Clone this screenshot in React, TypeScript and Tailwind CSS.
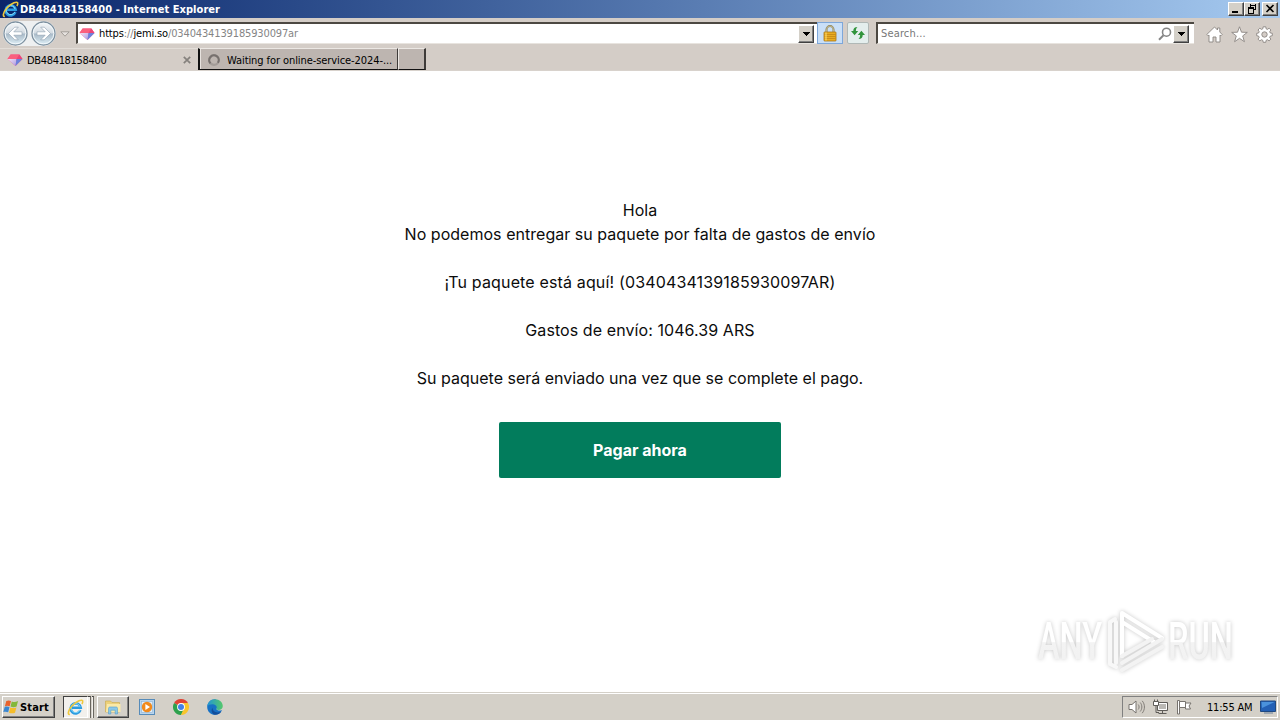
import type { ReactNode } from 'react';

const messageLines = [
  { text: 'Hola', tracking: '' },
  { text: 'No podemos entregar su paquete por falta de gastos de envío', tracking: 'tracking-[0.03px]' },
  { text: '', tracking: '' },
  { text: '¡Tu paquete está aquí! (0340434139185930097AR)', tracking: 'tracking-[0.15px]' },
  { text: '', tracking: '' },
  { text: 'Gastos de envío: 1046.39 ARS', tracking: 'tracking-[0.08px]' },
  { text: '', tracking: '' },
  { text: 'Su paquete será enviado una vez que se complete el pago.', tracking: '' },
];

const raised =
  'border border-t-white border-l-white border-r-[#404040] border-b-[#404040] shadow-[inset_-1px_-1px_0_#808080]';

const IeIcon = ({ className }: { className: string }) => (
  <svg viewBox="0 0 18 18" className={className} fill="none">
    <path d="M14.2 11.8A5.3 5.3 0 1 1 14.5 9.3H5" stroke="#2b9be0" strokeWidth="2.8" />
    <path d="M13.7 11.4A4.8 4.8 0 1 1 13.9 8.6" stroke="#8adcfa" strokeWidth="1" />
    <path d="M3 16.2C.5 17 .8 12.5 5.2 7.4 10 2 16.5-.2 16.7 2.3c.1.9-.2 1.9-.9 3" stroke="#efc83c" strokeWidth="1.7" />
  </svg>
);

const GemIcon = () => (
  <svg viewBox="0 0 16 14" className="h-[14px] w-4 shrink-0">
    <defs>
      <linearGradient id="gem" x1="0" y1="0" x2="1" y2="1">
        <stop offset="0" stopColor="#f4e3f2" />
        <stop offset="1" stopColor="#a99ae4" />
      </linearGradient>
    </defs>
    <path d="M3.6 1.5h8.8L15.5 6l-7 7L.5 6z" fill="#f4558c" />
    <path d="M.5 6 3.6 1.5h8.8L9.5 6z" fill="#fa5f7d" />
    <path d="M.5 6h9l-1 7z" fill="url(#gem)" />
    <path d="M9.5 6h6l-7 7z" fill="#6a82dd" />
    <path d="m12.4 1.5 3.1 4.5h-6z" fill="#ec4577" />
  </svg>
);

const NavArrow = ({ flip }: { flip?: boolean }) => (
  <svg viewBox="0 0 25 25" className={flip ? 'h-[25px] w-[25px] -scale-x-100' : 'h-[25px] w-[25px]'}>
    <defs>
      <linearGradient id="nav" x1="0" y1="0" x2="0" y2="1">
        <stop offset="0" stopColor="#f7f9fa" />
        <stop offset="0.48" stopColor="#d3dbe2" />
        <stop offset="0.52" stopColor="#a9bac8" />
        <stop offset="1" stopColor="#dff0f7" />
      </linearGradient>
    </defs>
    <circle cx="12.5" cy="12.5" r="11.5" fill="url(#nav)" stroke="#7d909f" strokeWidth="1.3" />
    <circle cx="12.5" cy="12.5" r="10.3" fill="none" stroke="#f2f8fb" />
    <path d="m11.7 6.2-6.2 6.3 6.2 6.3h3.6l-4.5-4.6H19v-3.4h-8.2l4.5-4.6z" fill="#fff" stroke="#8c9eae" strokeWidth="0.6" />
  </svg>
);

const DropButton = ({ className }: { className: string }) => (
  <div className={`flex items-center justify-center bg-[#d4d0c8] ${raised} ${className}`}>
    <svg viewBox="0 0 7 4" className="h-1 w-[7px]" shapeRendering="crispEdges">
      <path d="M0 0h7L3.5 4z" fill="#000" />
    </svg>
  </div>
);

const WindowButton = ({ children }: { children: ReactNode }) => (
  <div className={`h-[14px] w-4 bg-[#d4d0c8] ${raised}`}>
    <svg viewBox="0 0 14 12" className="h-3 w-[14px]" fill="none" stroke="#000" shapeRendering="crispEdges">
      {children}
    </svg>
  </div>
);

const TitleBar = () => (
  <div className="flex h-[18px] items-center bg-linear-to-r from-[#0a246a] to-[#a6caf0] pr-[2px] pl-[2px]">
    <IeIcon className="h-[17px] w-[17px]" />
    <span className="mt-[2px] w-[210px] pl-px text-[11px] font-bold tracking-[0.05px] text-white">
      DB48418158400 - Internet Explorer
    </span>
    <div className="ml-auto flex">
      <WindowButton>
        <path d="M3 9h6" strokeWidth="2" />
      </WindowButton>
      <WindowButton>
        <path d="M5 2h6M5.5 1v3M10.5 1v6M8 6.5h3" />
        <path d="M3 5h6" strokeWidth="2" />
        <path d="M3.5 5v5.5h5V5" />
      </WindowButton>
      <div className="ml-[2px]">
        <WindowButton>
          <path d="m3.5 2 7 7m0-7-7 7" strokeWidth="1.6" shapeRendering="auto" />
        </WindowButton>
      </div>
    </div>
  </div>
);

const inputFrame =
  'flex h-[22px] items-center border-t-2 border-l-2 border-b border-t-[#4c4842] border-l-[#4c4842] border-b-[#e8e4df] bg-white';

const AddressRow = () => (
  <div className="flex h-[29px] items-start bg-[#d4cdc7] text-[11px]">
    <div className="mt-[3px] ml-[3px] flex gap-[3px] rounded-full bg-[#eef0f1]">
      <NavArrow />
      <NavArrow flip />
    </div>
    <svg viewBox="0 0 10 6" className="mt-[13px] ml-[4px] h-[6px] w-[10px]">
      <path d="M.8.8h8.4L5 5.2z" fill="#e6e2de" stroke="#a39e99" />
    </svg>
    <div className={`mt-[4px] ml-[6px] w-[741px] pl-[1px] ${inputFrame}`}>
      <GemIcon />
      <span className="mt-[2px] ml-[4px] tracking-[-0.14px] whitespace-nowrap text-[#858585]">
        <span className="text-black">https</span>://<span className="text-black">jemi.so</span>/0340434139185930097ar
      </span>
      <DropButton className="mr-[3px] ml-auto h-[18px] w-4" />
    </div>
    <div className="mt-[4px] flex h-[22px] w-[26px] items-center justify-center border border-[#7da7da] bg-[#c9dff7]">
      <svg viewBox="0 0 14 17" className="h-[17px] w-[14px]">
        <path d="M3.5 8V4.6a3.5 3.5 0 0 1 7 0V8" fill="none" stroke="#8d8257" strokeWidth="2" />
        <path d="M3.5 8V4.6a3.5 3.5 0 0 1 7 0V8" fill="none" stroke="#ded7b2" strokeWidth="0.6" />
        <rect x="1" y="7" width="12" height="9" rx="0.6" fill="#e9ad22" stroke="#aa7411" strokeWidth="0.8" />
        <path d="M1.5 9.5h11M1.5 11.5h11M1.5 13.5h11" stroke="#be8115" strokeWidth="0.7" />
        <path d="M3 7.5v8" stroke="#ffdf73" />
      </svg>
    </div>
    <div className="mt-[4px] ml-[4px] flex h-[22px] w-[22px] items-center justify-center rounded-[2px] border border-[#b0b8b6] bg-[#e4eeed]">
      <svg viewBox="0 0 16 14" className="h-[14px] w-4">
        <path d="M7.5 1C4.6 1 3.3 2.5 3.3 5H1l3.6 4.3L8.2 5H5.9c0-1.9.4-3 1.6-4z" fill="#31943c" />
        <path d="M8.5 13c2.9 0 4.2-1.5 4.2-4H15l-3.6-4.3L7.8 9h2.3c0 1.9-.4 3-1.6 4z" fill="#31943c" />
      </svg>
    </div>
    <div className={`mt-[4px] ml-[7px] w-[318px] pl-[3px] ${inputFrame}`}>
      <span className="mt-[2px] tracking-[0.15px] text-[#777]">Search...</span>
      <svg viewBox="0 0 14 14" className="ml-auto h-[14px] w-[14px]" fill="none" stroke="#858585">
        <circle cx="8.5" cy="5.2" r="4" strokeWidth="1.6" />
        <path d="M5.5 8.3 1 12.8" strokeWidth="2" />
      </svg>
      <DropButton className="mr-[5px] ml-[1px] h-[18px] w-4" />
    </div>
    <div className="mt-[8px] mr-[7px] ml-auto flex gap-[8px]">
      <svg viewBox="0 0 17 17" className="h-[17px] w-[17px]">
        <path
          d="M8.5 1 .8 8.5l1.3 1.3L3 9v7h4v-5h3v5h4V9l.9.8 1.3-1.3L13.8 6V2h-2.3v2z"
          fill="#fff"
          stroke="#8b8682"
          strokeWidth="0.9"
        />
      </svg>
      <svg viewBox="0 0 17 17" className="h-[17px] w-[17px]">
        <path d="m8.5.8 2 5.4 5.8.2-4.6 3.5 1.7 5.8-4.9-3.4-4.9 3.4 1.7-5.8L.7 6.4l5.8-.2z" fill="#fff" stroke="#8b8682" strokeWidth="0.9" />
      </svg>
      <svg viewBox="0 0 17 17" className="h-[17px] w-[17px]">
        <path
          d="M7.2.8h2.6l.3 2 1.3.6 1.7-1.2 1.8 1.8-1.2 1.7.6 1.3 2 .3v2.4l-2 .4-.6 1.3 1.2 1.7-1.8 1.8-1.7-1.2-1.3.6-.3 2H7.2l-.4-2-1.3-.6-1.7 1.2L2 13.1l1.2-1.7-.6-1.3-1.9-.4V7.3l1.9-.3.6-1.3L2 4l1.8-1.8 1.7 1.2 1.3-.6z"
          fill="#fff"
          stroke="#8b8682"
          strokeWidth="0.9"
        />
        <circle cx="8.5" cy="8.5" r="2.7" fill="#d4cdc7" stroke="#8b8682" strokeWidth="0.9" />
      </svg>
    </div>
  </div>
);

const TabRow = () => (
  <div className="flex h-[24px] border-b border-[#d8d2cc] bg-[#d4cdc7] text-[11px]">
    <div className="mt-px flex h-[22px] w-[198px] items-center border-t border-[#e2ddd8] pl-[7px]">
      <GemIcon />
      <span className="mt-[3px] ml-[4px] tracking-[-0.33px]">DB48418158400</span>
      <svg viewBox="0 0 8 8" className="mr-[7px] ml-auto h-2 w-2">
        <path d="m.8.8 6.4 6.4m0-6.4L.8 7.2" stroke="#85817d" strokeWidth="1.7" />
      </svg>
    </div>
    <div className="mt-px flex h-[22px] w-[200px] items-center border-t border-r border-b border-l-2 border-t-[#ece8e4] border-r-[#3e3b39] border-b-[#111] border-l-[#111] bg-[#bdb5b0] pl-[7px] shadow-[inset_1px_0_0_#e8e3df]">
      <svg viewBox="0 0 14 14" className="mt-px h-[14px] w-[14px]" fill="none">
        <circle cx="7" cy="7" r="4.8" stroke="#a39c98" strokeWidth="2.2" />
        <path d="M3.4 10.4A4.8 4.8 0 1 1 11 9.8" stroke="#77716e" strokeWidth="2.1" />
      </svg>
      <span className="mt-[4px] ml-[6px] tracking-[-0.08px] whitespace-nowrap">Waiting for online-service-2024-...</span>
    </div>
    <div className="mt-px h-[22px] w-[28px] border-t border-r-2 border-b border-l border-t-[#ece8e4] border-r-[#3e3b39] border-b-[#111] border-l-[#ece8e4] bg-[#bdb5b0]" />
  </div>
);

const Watermark = () => (
  <svg
    viewBox="0 0 240 76"
    className="absolute top-[532px] left-[1030px] h-[76px] w-[240px] overflow-visible drop-shadow-[0_0_2px_rgba(0,0,0,0.22)]"
    fill="none"
  >
    <defs>
      <linearGradient id="mark" x1="0" y1="0" x2="0" y2="1">
        <stop offset="0.5" stopColor="#fff" />
        <stop offset="0.52" stopColor="#f3f3f3" />
        <stop offset="1" stopColor="#f1f1f1" />
      </linearGradient>
    </defs>
    <g fill="url(#mark)" fontFamily="'Roboto', 'Liberation Sans', sans-serif" fontSize="51" fontWeight="500">
      <text x="8" y="56" textLength="64" lengthAdjust="spacingAndGlyphs">ANY</text>
      <text x="138" y="56" textLength="65" lengthAdjust="spacingAndGlyphs">RUN</text>
    </g>
    <g strokeWidth="4" strokeLinejoin="round" strokeLinecap="round">
      <path d="m92 67 40-23" stroke="#f3f3f3" />
      <path d="M80 61V19l5-3M80 61l6 3M86 60V19" stroke="#f8f8f8" />
      <path d="M92 53V10l40 25M92 19l32 20" stroke="#fff" />
      <path d="m92 60 40-24M92 53l30-17" stroke="#f3f3f3" />
    </g>
  </svg>
);

const Page = () => (
  <main className="relative flex h-[621px] flex-col items-center bg-white pt-[127px] font-['Inter',sans-serif] text-base leading-6 text-[#0c0c0c]">
    <div className="text-center">
      {messageLines.map((line, i) => (
        <p key={i} className={`h-6 ${line.tracking}`}>
          {line.text}
        </p>
      ))}
    </div>
    <button className="mt-8 h-14 w-[282px] rounded-[2px] bg-[#027c5c] font-bold text-white">Pagar ahora</button>
    <Watermark />
  </main>
);

const Taskbar = () => (
  <div className="flex h-7 items-start border-t border-[#d4d0c8] bg-[#d4d0c8] pt-[3px] text-[11px] shadow-[inset_0_1px_0_#fff]">
    <div className={`ml-[2px] flex h-[22px] w-[53px] items-center ${raised}`}>
      <svg viewBox="0 0 16 16" className="h-4 w-4 shrink-0">
        <path d="M3.3 2c1.9-.9 3.3-.7 4.7.1L6.7 7.3c-1.5-.8-3-.9-4.8-.1z" fill="#e9632d" />
        <path d="M8.8 2.5c1.9.8 3.6.9 6.2-.4L13.6 7.5c-2 .9-4.2.9-6.1.1z" fill="#83b83b" />
        <path d="M1.7 8c1.8-.8 3.3-.6 4.8.1L5.2 13.3C3.7 12.5 2 12.4.3 13.1z" fill="#3a87d1" />
        <path d="M7.3 8.4c2 .8 4 .8 6.1 0l-1.4 5.3c-2 .9-4 .8-6 0z" fill="#f5bd2b" />
      </svg>
      <span className="mt-[2px] ml-px font-bold tracking-[0.16px]">Start</span>
    </div>
    <div className="ml-[8px] flex h-[22px] w-[25px] items-center justify-center border border-t-[#404040] border-r-white border-b-white border-l-[#404040] bg-[#f2f0ec]">
      <IeIcon className="h-[17px] w-[17px]" />
    </div>
    <div className="flex h-[22px] w-[6px] gap-px">
      <div className="w-[3px] border-t border-r border-t-[#404040] border-r-[#6a665f] bg-[#f2f0ec]" />
      <div className="w-[3px] border-t border-r border-t-[#404040] border-r-[#6a665f] bg-[#f2f0ec]" />
    </div>
    <div className={`ml-[3px] flex h-[22px] w-[32px] items-center justify-center ${raised}`}>
      <svg viewBox="0 0 18 16" className="h-4 w-[18px]">
        <path d="M1.5 2h5l1.5 1.5h7.5V13h-14z" fill="#ecd17a" stroke="#c9a748" strokeWidth="0.6" />
        <path d="M3 5h13.5V13H2z" fill="#fae9a8" />
        <path d="M4.5 15V9.5c0-1 .6-1.5 1.5-1.5h6c1 0 1.5.5 1.5 1.5V15h-2.3v-3.8H6.8V15z" fill="#8bc8e8" stroke="#579fc9" strokeWidth="0.6" />
      </svg>
    </div>
    <svg viewBox="0 0 16 16" className="mt-[3px] ml-[10px] h-4 w-4">
      <rect x="0.5" y="0.5" width="15" height="15" fill="#b9d5ed" stroke="#568bb9" />
      <rect x="2.5" y="2.5" width="11" height="11" fill="#dfebf5" stroke="#8cb2d5" strokeWidth="0.6" />
      <circle cx="8" cy="8" r="5.2" fill="#f18a1c" />
      <path d="M6.4 5v6L11 8z" fill="#fff" />
    </svg>
    <svg viewBox="0 0 16 16" className="mt-[3px] ml-[18px] h-4 w-4">
      <path d="M8 8 1.07 4A8 8 0 0 1 14.93 4z" fill="#df4334" />
      <path d="M8 8 1.07 4A8 8 0 0 0 8 16l3.4-6z" fill="#2da14d" />
      <path d="M8 8h3.5L8 16A8 8 0 0 0 14.93 4H8z" fill="#f8c52c" />
      <circle cx="8" cy="8" r="3.9" fill="#fff" />
      <circle cx="8" cy="8" r="3" fill="#4280e8" />
    </svg>
    <svg viewBox="0 0 16 16" className="mt-[3px] ml-[18px] h-4 w-4">
      <defs>
        <linearGradient id="edge" x1="0" y1="0" x2="1" y2="0">
          <stop offset="0" stopColor="#2296d5" />
          <stop offset="1" stopColor="#55c86a" />
        </linearGradient>
      </defs>
      <path d="M.2 8C.2 3.6 3.6.2 8 .2c2 0 3 3 3 6l-1.5 4c1 1.6 3.5 1.6 5.6.8C13.8 14 11.2 15.8 8 15.8 3.6 15.8.2 12.4.2 8z" fill="#1771c5" />
      <path d="M.3 7.5C.8 3 4 .2 8 .2c4.5 0 7.8 3.1 7.8 6.7 0 2.6-2 4-4.4 4-1.7 0-2.5-.6-2-1.3.8-1 .3-3.8-2.6-4.2C4 5 1.2 6 .3 7.5z" fill="url(#edge)" />
      <path d="M5.6 8.8c-.4 3.5 4 6 8.7 3.7-1.3 2.2-3.7 3.3-6.3 3.3-3-.6-4.5-4.5-2.4-7z" fill="#134e9b" />
    </svg>
    <div className="mr-[2px] ml-auto flex h-[22px] w-[156px] items-center border border-t-[#808080] border-r-white border-b-white border-l-[#808080] pl-[5px]">
      <svg viewBox="0 0 17 16" className="h-4 w-[17px]" fill="none" stroke="#77736e">
        <path d="M1 5.5h3L8 2v12l-4-3.5H1z" fill="#fff" />
        <path d="M10.2 5.5c1.2 1.5 1.2 3.5 0 5M12.2 3.5c2.2 2.7 2.2 6.3 0 9M14.2 1.8c3 3.7 3 8.7 0 12.4" strokeWidth="0.9" />
      </svg>
      <svg viewBox="0 0 17 16" className="ml-[7px] h-4 w-[17px]" stroke="#5f5c58">
        <path d="M5.5 3.5h10v8h-10z" fill="#c5c3bf" />
        <path d="M6.5 4.5h8v6h-8z" fill="#bab8b4" stroke="#fff" />
        <path d="M6.5 14.5h8M10.5 11.5v3" />
        <path d="M1.5 2.5h5v4h-5zM2.5.5v2m3-2v2" fill="#fff" />
        <path d="M4 6.5v7h3" fill="none" />
      </svg>
      <svg viewBox="0 0 16 16" className="ml-[7px] h-4 w-4" fill="#fff" stroke="#77736e">
        <path d="M1.5 1.5h2V15h-2z" />
        <path d="M9.5 4h5.5l-2 3 1.5 3h-5z" />
        <path d="M3.5 2.5h6v6h-6z" />
      </svg>
      <span className="mt-[2px] ml-[15px] tracking-[-0.2px] whitespace-nowrap">11:55 AM</span>
      <svg viewBox="0 0 16 14" className="mr-px ml-auto h-[14px] w-4">
        <path d="M.5 1h15v10.5H.5z" fill="#2460b5" stroke="#204981" />
        <path d="M1.5 2h13L2 8z" fill="#4b92dc" />
        <path d="M4 13h9" stroke="#8c9aaa" strokeWidth="1.5" />
      </svg>
    </div>
  </div>
);

export default function App() {
  return (
    <div className="h-[720px] w-[1280px] overflow-hidden bg-white font-['Tahoma','DejaVu_Sans_Condensed','DejaVu_Sans',sans-serif] text-black">
      <TitleBar />
      <AddressRow />
      <TabRow />
      <Page />
      <Taskbar />
    </div>
  );
}
